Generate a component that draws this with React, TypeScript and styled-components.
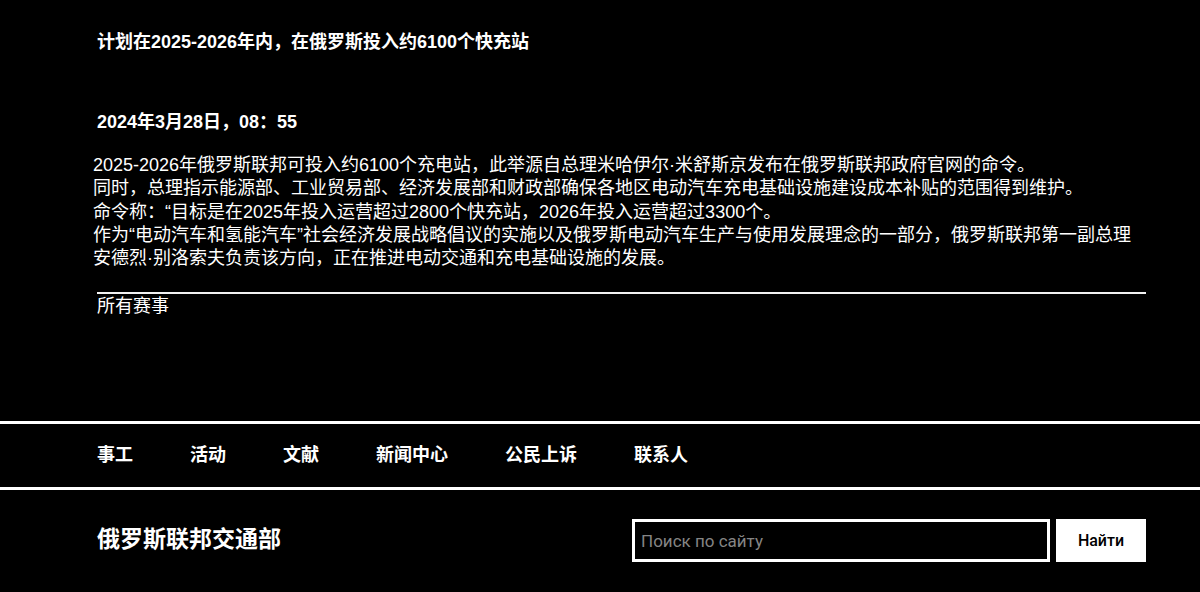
import React from 'react';
import styled, { createGlobalStyle } from 'styled-components';

const GlobalStyle = createGlobalStyle`
  html, body {
    margin: 0;
    padding: 0;
    background: #000;
  }

  body {
    color: #fff;
    font-family: "Liberation Sans", "Noto Sans CJK SC", sans-serif;
  }
`;

const Page = styled.div`
  background: #000;
  min-height: 592px;
  display: flex;
  flex-direction: column;
`;

const Article = styled.main`
  width: 1049px;
  margin-left: 97px;
  padding-top: 30px;
  display: flex;
  flex-direction: column;
`;

const Title = styled.h1`
  margin: 0;
  font-size: 18px;
  line-height: 24px;
  font-weight: 700;
`;

const DateLine = styled.div`
  margin-top: 56px;
  font-size: 18px;
  line-height: 24px;
  font-weight: 700;
`;

const Body = styled.p`
  margin: 20px 0 0 -4px;
  width: calc(100% + 4px);
  font-size: 18px;
  line-height: 23.25px;
  font-weight: 400;
`;

const Rule = styled.hr`
  margin: 22px 0 0;
  border: 0;
  height: 2px;
  background: #f2f2f2;
`;

const AllLink = styled.a`
  font-size: 18px;
  line-height: 24px;
  color: #fff;
  text-decoration: none;
`;

const Nav = styled.nav`
  margin-top: 103px;
  border-top: 3px solid #fff;
  border-bottom: 3px solid #fff;
  box-sizing: content-box;
  height: 62px;
  padding: 0 0 1px 97px;
  display: flex;
  align-items: center;
  gap: 57px;
`;

const NavItem = styled.a`
  font-size: 18px;
  font-weight: 700;
  line-height: 24px;
  color: #fff;
  text-decoration: none;
`;

const Footer = styled.footer`
  height: 102px;
  display: flex;
  align-items: center;
  padding: 0 54px 0 97px;
`;

const Brand = styled.div`
  flex: 1;
  font-size: 23px;
  font-weight: 700;
  line-height: 30px;
  padding-bottom: 4px;
`;

const SearchForm = styled.form`
  display: flex;
  gap: 6px;
  margin-top: -1px;
`;

const SearchInput = styled.input`
  box-sizing: border-box;
  width: 418px;
  height: 43px;
  background: #000;
  border: 3px solid #fff;
  padding: 0 6px;
  color: #fff;
  font-family: Roboto, "Liberation Sans", sans-serif;
  font-size: 17px;
  outline: none;

  &::placeholder {
    color: #858585;
  }
`;

const SearchButton = styled.button`
  box-sizing: border-box;
  width: 90px;
  height: 43px;
  border: 0;
  background: #fff;
  color: #000;
  font-family: Roboto, "Liberation Sans", sans-serif;
  font-size: 16px;
  font-weight: 500;
  cursor: pointer;
`;

const navItems = ['事工', '活动', '文献', '新闻中心', '公民上诉', '联系人'];

export default function App() {
  return (
    <Page>
      <GlobalStyle />
      <Article>
        <Title>计划在2025-2026年内，在俄罗斯投入约6100个快充站</Title>
        <DateLine>2024年3月28日，08：55</DateLine>
        <Body>
          2025-2026年俄罗斯联邦可投入约6100个充电站，此举源自总理米哈伊尔·米舒斯京发布在俄罗斯联邦政府官网的命令。
          <br />
          同时，总理指示能源部、工业贸易部、经济发展部和财政部确保各地区电动汽车充电基础设施建设成本补贴的范围得到维护。
          <br />
          命令称：“目标是在2025年投入运营超过2800个快充站，2026年投入运营超过3300个。
          <br />
          作为“电动汽车和氢能汽车”社会经济发展战略倡议的实施以及俄罗斯电动汽车生产与使用发展理念的一部分，俄罗斯联邦第一副总理安德烈·别洛索夫负责该方向，正在推进电动交通和充电基础设施的发展。
        </Body>
        <Rule />
        <AllLink href="#">所有赛事</AllLink>
      </Article>
      <Nav>
        {navItems.map((item) => (
          <NavItem key={item} href="#">
            {item}
          </NavItem>
        ))}
      </Nav>
      <Footer>
        <Brand>俄罗斯联邦交通部</Brand>
        <SearchForm onSubmit={(e) => e.preventDefault()}>
          <SearchInput type="text" placeholder="Поиск по сайту" />
          <SearchButton type="submit">Найти</SearchButton>
        </SearchForm>
      </Footer>
    </Page>
  );
}
